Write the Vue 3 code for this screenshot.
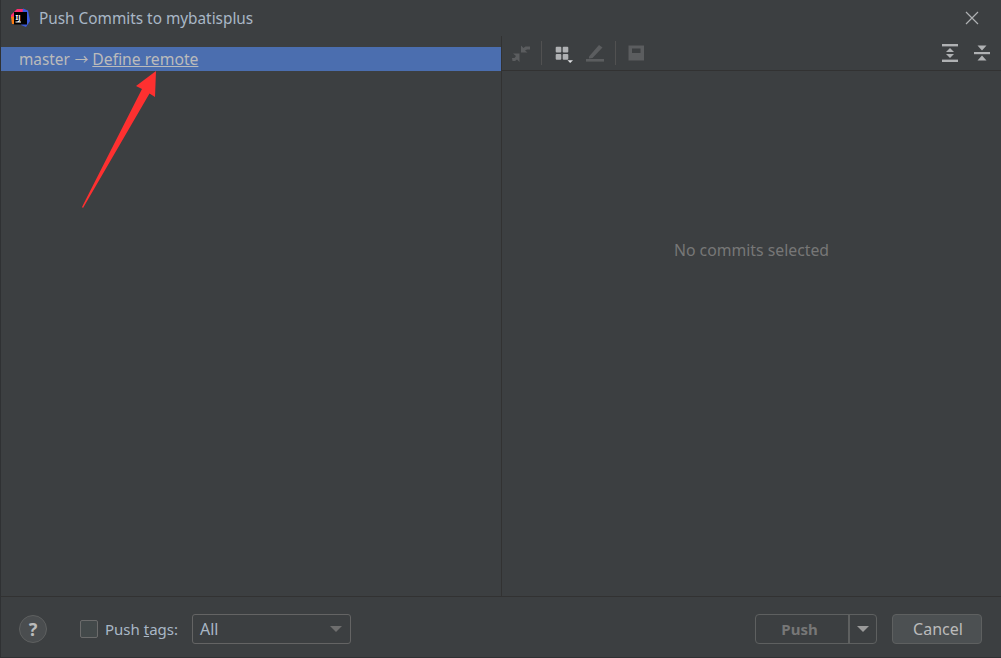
<template>
  <div class="dialog">
    <header class="titlebar">
      <svg class="app-icon" width="20" height="20" viewBox="0 0 20 20">
        <path d="M1 7 L7 1 L14 1 L13 6 L4 10 L1 10Z" fill="#ff2d6f" />
        <path d="M13 0.5 L18 2.5 L20 13 L16 19 L11 17Z" fill="#3b5bdb" />
        <path d="M1 9 L5 8 L6 16 L2 16Z" fill="#f97a12" />
        <rect x="4" y="4" width="13" height="12.5" fill="#000" />
        <text x="5.5" y="11.5" class="app-icon-text">IJ</text>
        <rect x="5.5" y="13.5" width="5.5" height="1" fill="#fff" />
      </svg>
      <span class="title">Push Commits to mybatisplus</span>
      <svg class="close" width="14" height="14" viewBox="0 0 14 14">
        <path d="M1 1 L13 13 M13 1 L1 13" stroke="#afb1b3" stroke-width="1.2" fill="none" />
      </svg>
    </header>

    <main class="body">
      <section class="left">
        <div class="row">
          <span>master</span>
          <span class="arrow">→</span>
          <a class="remote">Define remote</a>
        </div>
      </section>

      <section class="right">
        <div class="toolbar">
          <div class="tools">
            <svg class="tool" width="20" height="20" viewBox="0 0 20 20">
              <path d="M11 9.5 L11 2.5 L13.5 5 L15.5 3.5 H20 V6.5 H17 L15 7.5 L17.5 9.5Z M9.5 10.5 L9.5 19 L7 16.5 L5 18 H2.5 L2 15 H4.5 L6 13 L3 10.5Z" fill="#5b5d5f" />
            </svg>
            <i class="sep"></i>
            <svg class="tool" width="20" height="20" viewBox="0 0 20 20">
              <g fill="#afb1b3">
                <rect x="2.7" y="3.7" width="5.6" height="5.8" rx="1" />
                <rect x="9.7" y="3.7" width="5.6" height="5.8" rx="1" />
                <rect x="2.7" y="11" width="5.6" height="5.8" rx="1" />
                <rect x="9.7" y="11" width="5.6" height="5.8" rx="1" />
              </g>
              <path d="M14.5 17.3 H20 L17.2 20Z" fill="#dfe1e3" />
            </svg>
            <svg class="tool" width="20" height="20" viewBox="0 0 20 20">
              <path d="M5 13.5 L15 2 L18.5 4.5 L8.5 15 L5 15.5Z" fill="#5b5d5f" />
              <rect x="2" y="16" width="18" height="2.6" fill="#5b5d5f" />
            </svg>
            <i class="sep"></i>
            <svg class="tool" width="20" height="20" viewBox="0 0 20 20">
              <path d="M1.5 2.5 H17 V17.5 H1.5Z M5 5.5 V10 H13.5 V5.5Z" fill="#5b5d5f" fill-rule="evenodd" />
            </svg>
          </div>
          <div class="tools wide">
            <svg class="tool" width="16" height="18" viewBox="0 0 16 18">
              <g fill="#afb1b3">
                <rect x="0" y="0" width="16" height="2.4" />
                <rect x="0" y="15.6" width="16" height="2.4" />
                <path d="M8 4 L12 8 H4Z M8 14 L4 10 H12Z" />
              </g>
            </svg>
            <svg class="tool" width="16" height="16" viewBox="0 0 16 16">
              <g fill="#afb1b3">
                <rect x="0" y="7" width="16" height="2.2" />
                <path d="M3.5 0.5 H12.5 L8 5.5Z M8 10.5 L12.5 15.5 H3.5Z" />
              </g>
            </svg>
          </div>
        </div>
        <div class="empty">No commits selected</div>
      </section>
    </main>

    <footer class="footer">
      <div class="help">?</div>
      <label class="tags">
        <span class="check"></span>
        <span>Push <u>t</u>ags:</span>
      </label>
      <div class="select">
        <span>All</span>
        <i class="caret"></i>
      </div>
      <div class="spacer"></div>
      <div class="push">
        <span class="push-main">Push</span>
        <span class="push-drop"><i class="caret light"></i></span>
      </div>
      <button class="cancel">Cancel</button>
    </footer>

    <svg class="pointer" width="1001" height="658" viewBox="0 0 1001 658">
      <path d="M156 71 L136 86 L142 89 L82 207 L83 208 L149.5 93.5 L155 97Z" fill="#fe3030" />
    </svg>
  </div>
</template>

<script setup>
</script>

<style>
html, body {
  margin: 0;
  background: #3c3f41;
}
</style>

<style scoped>
.dialog {
  position: relative;
  width: 1001px;
  height: 658px;
  box-sizing: border-box;
  display: flex;
  flex-direction: column;
  background: #3c3f41;
  border-left: 1px solid #2f3133;
  border-bottom: 1px solid #2f3133;
  font-family: "Noto Sans", "Liberation Sans", sans-serif;
  font-size: 15.35px;
  color: #bbbbbb;
  overflow: hidden;
}
.titlebar {
  height: 36px;
  flex: none;
  display: flex;
  align-items: center;
  padding: 0 22px 0 9px;
}
.app-icon {
  margin-right: 9px;
}
.app-icon-text {
  font-size: 7px;
  font-weight: 700;
  fill: #fff;
}
.title {
  flex: 1;
  color: #a9b7c6;
}
.body {
  flex: 1;
  display: flex;
  min-height: 0;
  border-bottom: 1px solid #323232;
}
.left {
  width: 500px;
  flex: none;
  padding-top: 11px;
  border-right: 1px solid #323232;
}
.row {
  height: 24px;
  display: flex;
  align-items: center;
  padding-left: 18px;
  background: #4b6eaf;
  color: #bbbbbb;
}
.arrow {
  margin: -3px 4px 0 5px;
  font-family: "Noto Sans CJK SC", sans-serif;
  font-size: 13.5px;
}
.remote {
  font-size: 15.7px;
  text-decoration: underline;
}
.right {
  flex: 1;
  display: flex;
  flex-direction: column;
}
.toolbar {
  height: 34px;
  flex: none;
  display: flex;
  align-items: center;
  justify-content: space-between;
  padding: 0 11px 0 8px;
  border-bottom: 1px solid #323232;
}
.tools {
  display: flex;
  align-items: center;
  gap: 11px;
}
.tools.wide {
  gap: 16px;
}
.sep {
  width: 1px;
  height: 24px;
  background: #515151;
}
.empty {
  flex: 1;
  display: flex;
  align-items: center;
  justify-content: center;
  padding-bottom: 168px;
  box-sizing: border-box;
  color: #777777;
  font-size: 15.8px;
}
.footer {
  height: 60px;
  flex: none;
  box-sizing: border-box;
  display: flex;
  align-items: center;
  padding: 4px 19px 0 18px;
  font-size: 15px;
}
.help {
  width: 28px;
  height: 28px;
  box-sizing: border-box;
  border-radius: 50%;
  display: flex;
  align-items: center;
  justify-content: center;
  margin-right: 33px;
  background: #4a4d4f;
  border: 1px solid #5e6060;
  font-weight: 700;
  font-size: 18px;
  color: #bbbbbb;
}
.tags {
  display: flex;
  align-items: center;
  gap: 7px;
  color: #a9b7c6;
}
.check {
  width: 16px;
  height: 16px;
  border: 1px solid #6b6b6b;
  border-radius: 2px;
  background: #43494a;
}
.select {
  width: 159px;
  height: 30px;
  box-sizing: border-box;
  margin-left: 14px;
  display: flex;
  align-items: center;
  justify-content: space-between;
  padding: 0 8px 0 7px;
  border: 1px solid #646464;
  border-radius: 3px;
  color: #a9b7c6;
  font-size: 16px;
}
.caret {
  width: 0;
  height: 0;
  border-left: 6px solid transparent;
  border-right: 6px solid transparent;
  border-top: 6px solid #6e6e6e;
}
.caret.light {
  border-top-color: #9a9a9a;
}
.spacer {
  flex: 1;
}
.push {
  width: 122px;
  height: 30px;
  box-sizing: border-box;
  display: flex;
  border: 1px solid #5e6060;
  border-radius: 4px;
  color: #777777;
  font-weight: 700;
}
.push-main {
  flex: 1;
  display: flex;
  align-items: center;
  justify-content: center;
  padding-right: 5px;
  border-right: 2px solid #5e6060;
}
.push-drop {
  width: 26px;
  display: flex;
  align-items: center;
  justify-content: center;
}
.cancel {
  width: 90px;
  height: 30px;
  margin-left: 15px;
  padding: 0 0 0 2px;
  box-sizing: border-box;
  border: 1px solid #5e6060;
  border-radius: 4px;
  background: #4c5052;
  color: #bbbbbb;
  font: inherit;
  font-size: 16px;
}
.pointer {
  position: absolute;
  left: -1px;
  top: 0;
  pointer-events: none;
}
</style>
